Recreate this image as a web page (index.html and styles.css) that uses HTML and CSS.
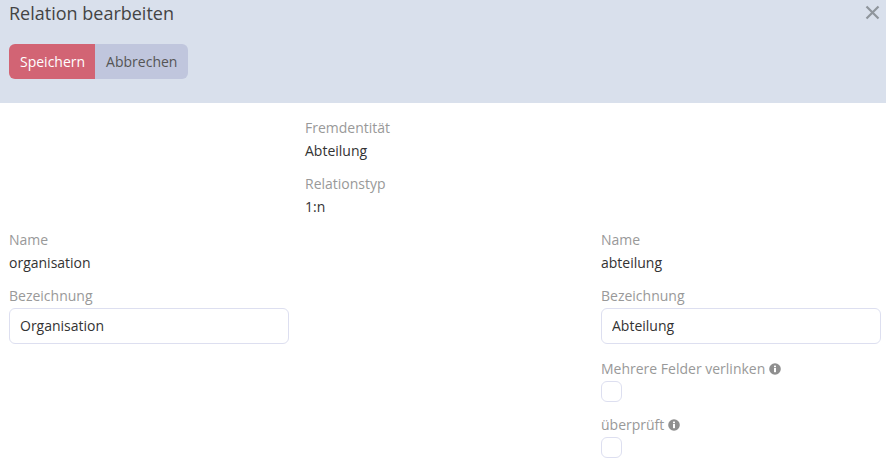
FILE: index.html
```html
<!DOCTYPE html>
<html lang="en">

<head>
    <meta charset="UTF-8">
    <meta name="viewport" content="width=device-width, initial-scale=1.0">
    <title>Relation bearbeiten</title>
    <link rel="stylesheet" href="styles.css">
</head>

<body>
    <!-- Header with title and actions -->
    <div class="modal-header">
        <div class="title-row">
            <h1>Relation bearbeiten</h1>
            <svg class="close-icon" width="15" height="15" viewBox="0 0 15 15">
                <path d="M1.5 1.5 L13.5 13.5 M13.5 1.5 L1.5 13.5" stroke="#8f959c" stroke-width="2.2" fill="none" />
            </svg>
        </div>
        <div class="btn-group">
            <button class="btn btn-save">Speichern</button>
            <button class="btn btn-cancel">Abbrechen</button>
        </div>
    </div>

    <div class="modal-body">
        <!-- Foreign entity info -->
        <div class="form-row">
            <div class="column"></div>
            <div class="column">
                <div class="field">
                    <label>Fremdentität</label>
                    <div class="value">Abteilung</div>
                </div>
                <div class="field">
                    <label>Relationstyp</label>
                    <div class="value">1:n</div>
                </div>
            </div>
            <div class="column"></div>
        </div>

        <!-- Both sides of the relation -->
        <div class="form-row">
            <div class="column">
                <div class="field">
                    <label>Name</label>
                    <div class="value">organisation</div>
                </div>
                <div class="field">
                    <label>Bezeichnung</label>
                    <input type="text" value="Organisation">
                </div>
            </div>
            <div class="column"></div>
            <div class="column">
                <div class="field">
                    <label>Name</label>
                    <div class="value">abteilung</div>
                </div>
                <div class="field">
                    <label>Bezeichnung</label>
                    <input type="text" value="Abteilung">
                </div>
                <div class="field">
                    <label>Mehrere Felder verlinken
                        <svg class="info-icon" width="12" height="12" viewBox="0 0 12 12">
                            <circle cx="6" cy="6" r="5.8" fill="#8f8f8f" />
                            <rect x="5" y="5" width="2" height="4.2" fill="#fff" />
                            <rect x="5" y="2.6" width="2" height="1.6" fill="#fff" />
                        </svg>
                    </label>
                    <div class="checkbox"></div>
                </div>
                <div class="field">
                    <label>überprüft
                        <svg class="info-icon" width="12" height="12" viewBox="0 0 12 12">
                            <circle cx="6" cy="6" r="5.8" fill="#8f8f8f" />
                            <rect x="5" y="5" width="2" height="4.2" fill="#fff" />
                            <rect x="5" y="2.6" width="2" height="1.6" fill="#fff" />
                        </svg>
                    </label>
                    <div class="checkbox"></div>
                </div>
            </div>
        </div>
    </div>
</body>

</html>
```

FILE: styles.css
```css
/* Basic Reset */
* {
    margin: 0;
    padding: 0;
    box-sizing: border-box;
}

body {
    font-family: "Open Sans", sans-serif;
    font-size: 14px;
    color: #333;
    background-color: #fff;
    overflow: hidden;
}

/* Header */
.modal-header {
    height: 103px;
    background-color: #d9e0ec;
    padding: 0 6px 0 9px;
}

.title-row {
    display: flex;
    justify-content: space-between;
    align-items: center;
    height: 26px;
    margin-bottom: 18px;
}

.title-row h1 {
    font-size: 18px;
    font-weight: 400;
    color: #444;
}

.close-icon {
    margin-top: -1px;
}

.btn-group {
    display: flex;
}

.btn {
    height: 35px;
    border: none;
    font-family: inherit;
    font-size: 14px;
}

.btn-save {
    padding: 0 10px 0 11px;
    background-color: #d26474;
    color: #fff;
    border-radius: 6px 0 0 6px;
}

.btn-cancel {
    padding: 0 11px;
    background-color: #c0c6dd;
    color: #555;
    border-radius: 0 6px 6px 0;
}

/* Form */
.modal-body {
    padding: 13px 0 0 9px;
}

.form-row {
    display: grid;
    grid-template-columns: repeat(3, 280px);
    column-gap: 16px;
}

.field {
    margin-bottom: 10px;
}

.field label {
    display: block;
    height: 23px;
    line-height: 23px;
    color: #999;
}

.value {
    height: 23px;
    line-height: 23px;
    color: #333;
}

.field input {
    display: block;
    width: 100%;
    height: 36px;
    margin-top: 1px;
    margin-bottom: 13px;
    padding: 0 10px 2px;
    border: 1px solid #dddff0;
    border-radius: 6px;
    font-family: inherit;
    font-size: 14px;
    color: #333;
}

.checkbox {
    width: 21px;
    height: 21px;
    margin-top: 1px;
    margin-bottom: 11px;
    border: 1px solid #dddff0;
    border-radius: 6px;
    background-color: #fff;
}

.info-icon {
    vertical-align: -1px;
}
```
